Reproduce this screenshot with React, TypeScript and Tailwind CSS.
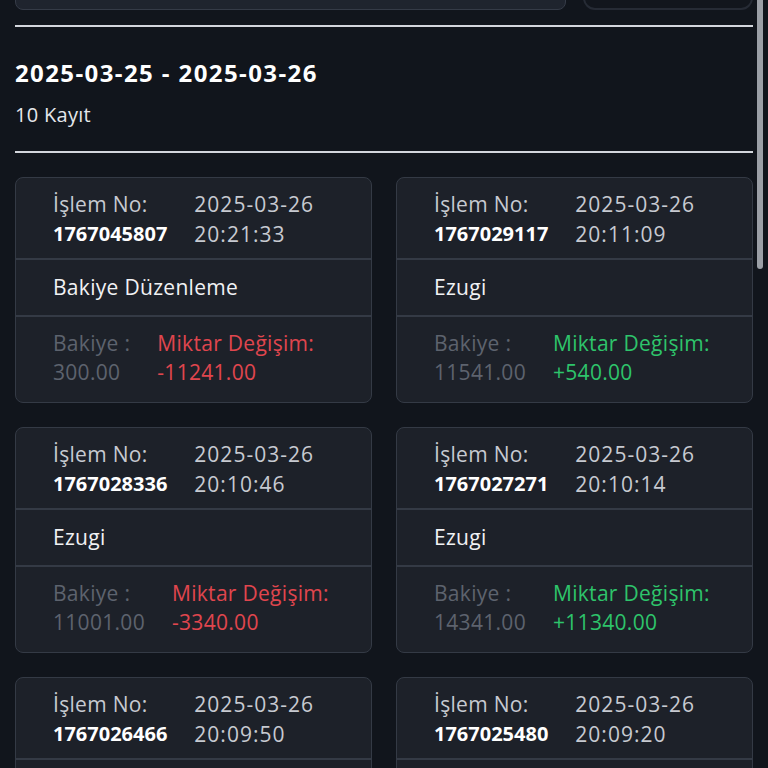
import React from "react";

interface Txn {
	id: string;
	date: string;
	time: string;
	source: string;
	balance: string;
	change: string;
}

const txns: Txn[] = [
	{ id: "1767045807", date: "2025-03-26", time: "20:21:33", source: "Bakiye Düzenleme", balance: "300.00", change: "-11241.00" },
	{ id: "1767029117", date: "2025-03-26", time: "20:11:09", source: "Ezugi", balance: "11541.00", change: "+540.00" },
	{ id: "1767028336", date: "2025-03-26", time: "20:10:46", source: "Ezugi", balance: "11001.00", change: "-3340.00" },
	{ id: "1767027271", date: "2025-03-26", time: "20:10:14", source: "Ezugi", balance: "14341.00", change: "+11340.00" },
	{ id: "1767026466", date: "2025-03-26", time: "20:09:50", source: "Ezugi", balance: "3001.00", change: "-2000.00" },
	{ id: "1767025480", date: "2025-03-26", time: "20:09:20", source: "Ezugi", balance: "5001.00", change: "+1500.00" }
];

function TxnCard({ txn }: { txn: Txn }) {
	const positive = txn.change.startsWith("+");
	return (
		<div className="rounded-lg border border-[#343a45] bg-[#1d2129] overflow-hidden">
			<div className="flex gap-[27px] pl-[37px] pt-[11px] pb-[9px] leading-[30px]">
				<div>
					<div className="text-[#c7cad1]">İşlem No:</div>
					<div className="font-bold text-[20px] tracking-normal text-white">{txn.id}</div>
				</div>
				<div className="text-[#c7cad1] tracking-[1px]">
					<div>{txn.date}</div>
					<div>{txn.time}</div>
				</div>
			</div>
			<div className="flex h-[57px] items-center border-t-2 border-[#343a45] pl-[37px] text-[#f1f2f4]">
				{txn.source}
			</div>
			<div className="flex h-[87px] gap-[27px] border-t-2 border-[#343a45] pl-[37px] pt-[12px] leading-[29px]">
				<div className="text-[#5d636e]">
					<div>Bakiye :</div>
					<div>{txn.balance}</div>
				</div>
				<div className={positive ? "text-[#2ec46b]" : "text-[#e0464e]"}>
					<div>Miktar Değişim:</div>
					<div>{txn.change}</div>
				</div>
			</div>
		</div>
	);
}

export default function App() {
	return (
		<div className="relative h-screen overflow-hidden bg-[#11151c] font-['Open_Sans',sans-serif] text-[21px] tracking-[0.3px]">
			<div className="-mt-[34px] px-[15px]">
				{/* filter row, scrolled mostly out of view */}
				<div className="flex h-[44px] gap-[17px]">
					<div className="flex-1 rounded-lg border border-[#353b47] bg-[#1f242e]" />
					<div className="w-[170px] rounded-xl border-2 border-[#262b35] bg-[#12161d]" />
				</div>
				<div className="mt-[15px] h-[2px] bg-[#d3d6dc]" />

				<h2 className="mt-[30px] text-[24px] font-bold leading-[32px] tracking-[1.4px] text-white">
					2025-03-25 - 2025-03-26
				</h2>
				<p className="mt-[12px] text-[20px] leading-[28px] text-[#e5e7eb]">10 Kayıt</p>
				<div className="mt-[22px] h-[2px] bg-[#d3d6dc]" />

				<div className="mt-[24px] grid grid-cols-2 gap-6">
					{txns.map(t => (
						<TxnCard key={t.id} txn={t} />
					))}
				</div>
			</div>

			{/* scrollbar thumb */}
			<div className="absolute right-[5px] top-0 h-[269px] w-[6px] rounded-b-full bg-[#9b9fa6]" />
		</div>
	);
}
